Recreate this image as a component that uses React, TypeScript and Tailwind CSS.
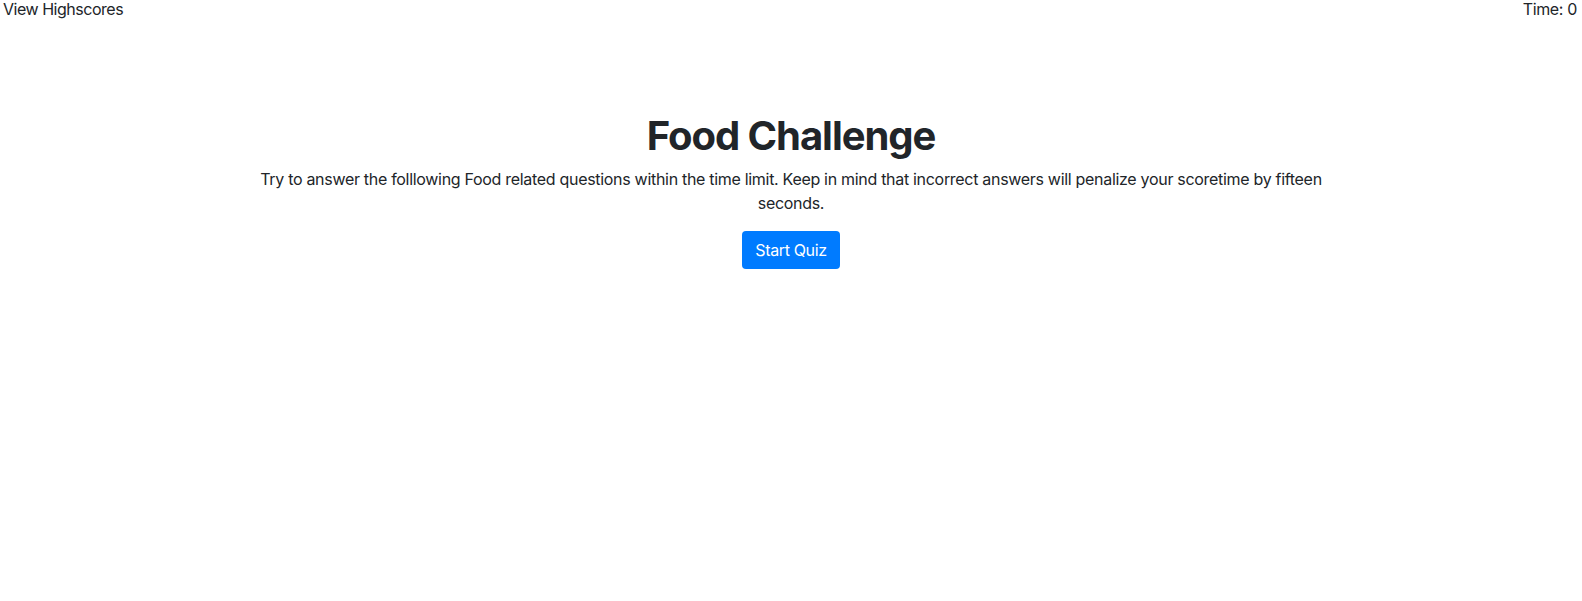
export default function App() {
  return (
    <div className="min-h-[601px] bg-white text-[#212529] font-['Inter','Liberation_Sans',sans-serif] text-base leading-6 tracking-[-0.022em]">
      <header className="flex justify-between pl-[3px] pr-[5px] leading-[18px]">
        <a className="cursor-pointer tracking-[-0.03em]">View Highscores</a>
        <span>Time: 0</span>
      </header>

      <main className="mx-auto max-w-[1140px] px-[15px] pt-[94px] text-center">
        <h1 className="mb-[7px] text-[40px] leading-[1.2] font-bold tracking-[-0.026em]">Food Challenge</h1>
        <p className="mx-auto mb-4 max-w-[1070px] tracking-[-0.019em]">
          Try to answer the folllowing Food related questions within the time limit. Keep in mind that incorrect answers will penalize your scoretime by fifteen seconds.
        </p>
        <button className="rounded bg-[#007bff] px-[13px] py-[7px] text-white leading-6">Start Quiz</button>
      </main>
    </div>
  )
}
